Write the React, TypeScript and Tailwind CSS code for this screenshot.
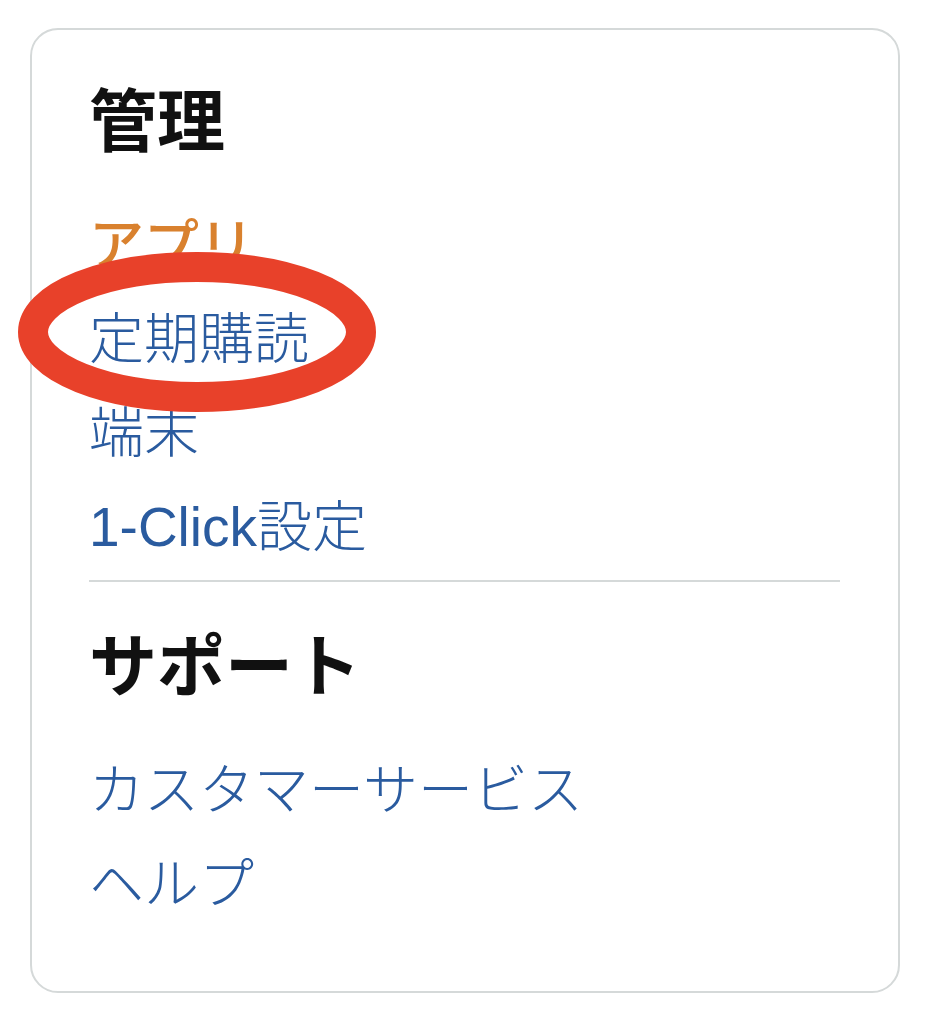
import React from "react"

const font = { fontFamily: '"Noto Sans CJK JP", "Noto Sans", sans-serif' }

function Item({ children, active }: { children: React.ReactNode; active?: boolean }) {
  return (
    <div
      className={
        "h-[94px] text-[55px] leading-[94px] " +
        (active ? "text-[#d9812e] font-medium" : "text-[#2a5b9f] font-light")
      }
    >
      {children}
    </div>
  )
}

export default function App() {
  return (
    <div className="relative min-h-[1024px] w-[940px] bg-white" style={font}>
      <div className="pl-[30px] pt-[28px]">
        <div className="w-[870px] rounded-[28px] border-2 border-[#d5d9d9] pl-[57px] pr-[58px] pt-[53px] pb-[65px]">
          <h2 className="text-[68px] font-bold leading-[68px] text-[#111]">管理</h2>
          <div className="mt-[42px]">
            <Item active>アプリ</Item>
            <Item>定期購読</Item>
            <Item>端末</Item>
            <Item>
              <span className="font-['Liberation_Sans'] leading-none">1-Click</span>設定
            </Item>
          </div>
          <div className="mt-[11px] h-[2px] bg-[#d5d9d9]" />
          <h2 className="mt-[46px] text-[68px] font-bold leading-[68px] text-[#111]">サポート</h2>
          <div className="mt-[42px]">
            <Item>カスタマーサービス</Item>
            <Item>ヘルプ</Item>
          </div>
        </div>
      </div>
      <svg
        className="absolute left-[18px] top-[252px]"
        width="358"
        height="160"
        viewBox="0 0 358 160"
      >
        <ellipse cx="179" cy="80" rx="164" ry="65" fill="none" stroke="#e8412a" strokeWidth="30" />
      </svg>
    </div>
  )
}
